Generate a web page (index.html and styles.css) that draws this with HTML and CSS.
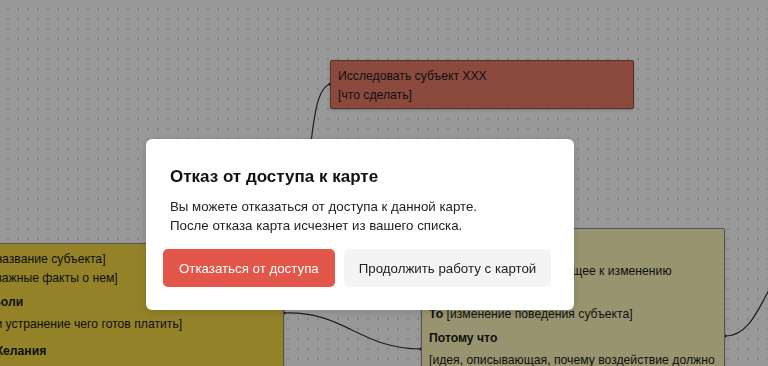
FILE: index.html
```html
<!DOCTYPE html>
<html lang="ru">
<head>
<meta charset="UTF-8">
<meta name="viewport" content="width=device-width, initial-scale=1.0">
<title>Карта</title>
<link rel="stylesheet" href="styles.css">
</head>
<body>

  <!-- Canvas with map nodes -->
  <div class="canvas">
    <svg class="edges" width="768" height="366" viewBox="0 0 768 366">
      <path d="M330 84 C 318 88, 314 110, 308 170" />
      <path d="M284 313 C 345 311, 360 349, 421 349" />
      <path d="M725 336 C 748 336, 758 310, 770 288" />
      <circle cx="330" cy="84" r="1.6" />
      <circle cx="284" cy="313" r="1.6" />
      <circle cx="421" cy="349" r="1.6" />
      <circle cx="725" cy="336" r="1.6" />
    </svg>

    <div class="node node-red" style="left:330px; top:60px; width:304px;">
      <p>Исследовать субъект XXX</p>
      <p>[что сделать]</p>
    </div>

    <div class="node node-yellow" style="left:-16px; top:243px; width:300px;">
      <p>[название субъекта]</p>
      <p>[важные факты о нем]</p>
      <p class="head">Боли</p>
      <p>[и устранение чего готов платить]</p>
      <p class="head">Желания</p>
    </div>

    <div class="node node-khaki" style="left:421px; top:228px; width:304px;">
      <p class="head">Если</p>
      <p class="nowrap">[то воздействие, приводящее к изменению</p>
      <p>поведения]</p>
      <p class="gap"><b>То</b> [изменение поведения субъекта]</p>
      <p class="head">Потому что</p>
      <p class="nowrap">[идея, описывающая, почему воздействие должно</p>
    </div>
  </div>

  <!-- Modal -->
  <div class="overlay">
    <div class="dialog">
      <h3>Отказ от доступа к карте</h3>
      <p>Вы можете отказаться от доступа к данной карте.<br>После отказа карта исчезнет из вашего списка.</p>
      <div class="actions">
        <button class="btn btn-danger">Отказаться от доступа</button>
        <button class="btn btn-light">Продолжить работу с картой</button>
      </div>
    </div>
  </div>

</body>
</html>
```

FILE: styles.css
```css
* {
  box-sizing: border-box;
}

body {
  margin: 0;
  width: 768px;
  height: 366px;
  overflow: hidden;
  font-family: "Liberation Sans", Arial, sans-serif;
  color: #1a1a1a;
}

/* Styles for canvas */
.canvas {
  position: relative;
  width: 768px;
  height: 366px;
  background-color: #ffffff;
  background-image: radial-gradient(circle, #dcdcdc 0.7px, transparent 1px);
  background-size: 10px 10px;
  background-position: 3px 4px;
  overflow: hidden;
}

.edges {
  position: absolute;
  left: 0;
  top: 0;
}

.edges path {
  fill: none;
  stroke: #333;
  stroke-width: 1.2;
}

.edges circle {
  fill: #222;
}

.node {
  position: absolute;
  padding: 6px 7px;
  border: 1px solid #8a8a8a;
  border-radius: 2px;
  box-shadow: 0 1px 3px rgba(0, 0, 0, 0.2);
  font-size: 12.2px;
  line-height: 19px;
  height: 300px;
}

.node p {
  margin: 0;
}

.node .nowrap {
  white-space: nowrap;
}

.node .head {
  font-weight: bold;
  margin-top: 5px;
}

.node .head + p {
  margin-top: 3px;
}

.node .gap {
  margin-top: 5px;
}

.node-red {
  height: 49px;
  background-color: #e97c6a;
  border-color: #8a5046;
}

.node-yellow {
  background-color: #f5d944;
  padding-top: 6px;
}

.node-yellow .head + p + .head {
  margin-top: 8px;
}

.node-khaki {
  background-color: #fdf7bb;
  padding-top: 6px;
}

/* Styles for modal */
.overlay {
  position: fixed;
  left: 0;
  top: 0;
  width: 100%;
  height: 100%;
  background-color: rgba(0, 0, 0, 0.4);
  padding: 139px 0 0 146px;
}

.dialog {
  width: 428px;
  background-color: #fff;
  border-radius: 6px;
  padding: 26px 24px 23px;
  box-shadow: 0 2px 10px rgba(0, 0, 0, 0.15);
}

.dialog h3 {
  margin: 0 0 8px;
  font-size: 17px;
  line-height: 24px;
  color: #111;
}

.dialog p {
  margin: 0;
  font-size: 13.3px;
  line-height: 19px;
  color: #222;
}

.actions {
  display: flex;
  gap: 9px;
  margin: 14px 0 0 -7px;
}

.btn {
  height: 38px;
  padding: 0 15px;
  border: none;
  border-radius: 5px;
  font-family: inherit;
  font-size: 13.3px;
  white-space: nowrap;
  flex-shrink: 0;
}

.btn-danger {
  padding: 0 16px;
  background-color: #e2574a;
  color: #fff;
}

.btn-light {
  background-color: #f4f4f4;
  color: #222;
}
```
